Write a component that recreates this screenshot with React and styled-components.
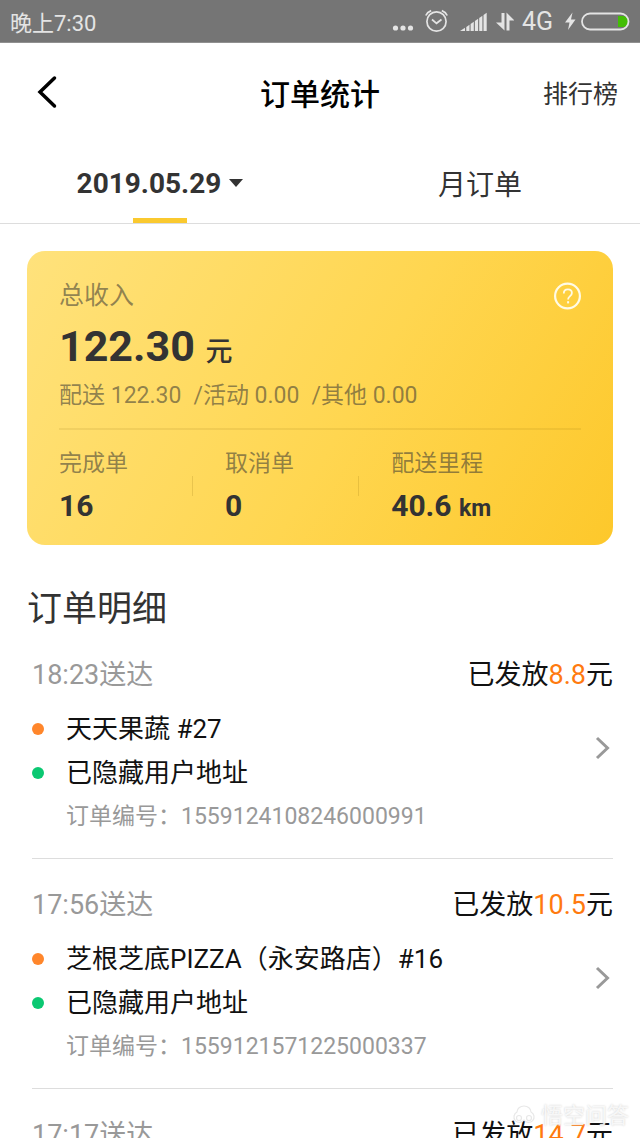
import React, { useState } from 'react'
import styled, { createGlobalStyle } from 'styled-components'

const stats = [
  { label: '完成单', value: '16' },
  { label: '取消单', value: '0' },
  { label: '配送里程', value: '40.6', unit: 'km' },
]

const orders = [
  { time: '18:23', pay: '8.8', shop: '天天果蔬 #27', address: '已隐藏用户地址', number: '1559124108246000991' },
  { time: '17:56', pay: '10.5', shop: '芝根芝底PIZZA（永安路店）#16', address: '已隐藏用户地址', number: '1559121571225000337' },
  { time: '17:17', pay: '14.7', shop: '天天果蔬 #21', address: '已隐藏用户地址', number: '1559119036117000254' },
]

const StatusIcons = () => (
  <StatusGroup>
    <svg width='23' height='42' fill='#e4e4e4'>
      <circle cx='4.5' cy='28' r='2.6' />
      <circle cx='12' cy='28' r='2.6' />
      <circle cx='19.5' cy='28' r='2.6' />
    </svg>
    <svg width='28' height='42' fill='none' stroke='#e4e4e4' strokeWidth='1.7'>
      <circle cx='14.5' cy='21.5' r='9.6' />
      <path d='M10 19.5l4.5 3.8 5-3.8' />
      <path d='M3.8 15.5c1-2.3 3-4 5.4-4.9M25.2 15.5c-1-2.3-3-4-5.4-4.9' />
    </svg>
    <svg width='30' height='42' fill='#e4e4e4'>
      <path d='M2 31l5-3.2V31z' />
      <path d='M8.3 27l3.2-2.2V31H8.3z' />
      <path d='M12.6 24l3.2-2.2V31h-3.2z' />
      <path d='M16.9 21l3.2-2.2V31h-3.2z' />
      <path d='M21.2 18l3.2-2.2V31h-3.2z' />
      <path d='M25.5 15l3.2-2.2V31h-3.2z' />
    </svg>
    <svg width='18' height='42' fill='#e4e4e4'>
      <path d='M5.5 13h3v17.5L0 22.5h5.5z' />
      <path d='M10.5 30.5h3V20.5H18.5L10.5 12.5z' />
    </svg>
    <span>4G</span>
    <svg width='69' height='42'>
      <path d='M11.5 12.5L4 22.5h4.5L7 30l7.5-10.5H10z' fill='#e4e4e4' />
      <path d='M57 16h5a5.5 5.5 0 0 1 0 11h-5z' fill='#43bd05' />
      <rect x='21' y='13.5' width='46.5' height='16' rx='8' fill='none' stroke='#e4e4e4' strokeWidth='1.8' />
    </svg>
  </StatusGroup>
)

const Order = ({ order }) => (
  <OrderItem>
    <OrderHead>
      <OrderTime>{order.time}送达</OrderTime>
      <span>
        已发放<Pay>{order.pay}</Pay>元
      </span>
    </OrderHead>
    <OrderLink href='#order'>
      <Route>
        <Stop $color='#ff862b'>{order.shop}</Stop>
        <Stop $color='#0bc872'>{order.address}</Stop>
        <OrderNumber>订单编号：{order.number}</OrderNumber>
      </Route>
      <svg width='22' height='74' fill='none' stroke='#999' strokeWidth='3' aria-hidden='true'>
        <path d='M6 27l10.5 10L6 47' />
      </svg>
    </OrderLink>
  </OrderItem>
)

const App = () => {
  const [tab, setTab] = useState('day')

  return (
    <Page>
      <GlobalStyle />
      <StatusBar>
        <span>晚上7:30</span>
        <StatusIcons />
      </StatusBar>

      <Header>
        <BackButton aria-label='返回'>
          <svg width='22' height='36' fill='none' stroke='#000' strokeWidth='3.5' strokeLinecap='round'>
            <path d='M18.5 4L4 18l14.5 14' />
          </svg>
        </BackButton>
        <Title>订单统计</Title>
        <RankLink href='#rank'>排行榜</RankLink>
      </Header>

      <Tabs>
        <Tab $active={tab === 'day'} onClick={() => setTab('day')}>
          2019.05.29
          <svg width='14' height='8' fill='#333' aria-hidden='true'>
            <path d='M0 0h14L7 8z' />
          </svg>
        </Tab>
        <Tab $active={tab === 'month'} onClick={() => setTab('month')}>
          月订单
        </Tab>
      </Tabs>

      <Card>
        <CardTop>
          <span>总收入</span>
          <HelpButton aria-label='收入说明'>
            <svg width='28' height='28' fill='none' stroke='#fffbe6' strokeWidth='2.2'>
              <circle cx='14.5' cy='14' r='12.4' />
              <path d='M10.8 11.4c0-2.6 1.6-4 4.1-4s4 1.4 4 3.6c0 3-3.8 3.2-3.8 6.4' strokeWidth='1.8' />
              <path d='M15.1 19.2v2.2' strokeWidth='2' />
            </svg>
          </HelpButton>
        </CardTop>
        <Amount>
          122.30 <AmountUnit>元</AmountUnit>
        </Amount>
        <Breakdown>
          <span>配送 122.30</span>
          <span>/活动 0.00</span>
          <span>/其他 0.00</span>
        </Breakdown>
        <Stats>
          {stats.map((stat) => (
            <Stat key={stat.label}>
              <div>
                <StatLabel>{stat.label}</StatLabel>
                <StatValue>
                  {stat.value} {stat.unit && <StatUnit>{stat.unit}</StatUnit>}
                </StatValue>
              </div>
            </Stat>
          ))}
        </Stats>
      </Card>

      <SectionTitle>订单明细</SectionTitle>
      <OrderList>
        {orders.map((order) => (
          <Order key={order.number} order={order} />
        ))}
      </OrderList>

      <Watermark>
        <svg width='28' height='24' fill='#fff' stroke='#e8e8e8' strokeWidth='1.2'>
          <path d='M7 8a7 6 0 0 1 14 0 5.5 5.5 0 1 1-7 8 5.5 5.5 0 1 1-7-8z' />
          <circle cx='9' cy='14' r='2.5' />
          <circle cx='19' cy='14' r='2.5' />
        </svg>
        悟空问答
      </Watermark>
    </Page>
  )
}

export default App

// Styled components
const GlobalStyle = createGlobalStyle`
  * {
    box-sizing: border-box;
  }

  body {
    margin: 0;
    background: #fff;
    font-family: Roboto, 'Noto Sans CJK SC', sans-serif;
  }

  button {
    padding: 0;
    border: none;
    background: none;
    font-family: inherit;
    cursor: pointer;
  }

  a {
    color: inherit;
    text-decoration: none;
  }

  svg {
    display: block;
    flex-shrink: 0;
  }
`

const Page = styled.div`
  position: relative;
  height: 100vh;
  overflow: hidden;
  color: #111;
`

const StatusBar = styled.div`
  display: flex;
  justify-content: space-between;
  align-items: center;
  height: 43px;
  padding: 0 10px;
  border-bottom: 1px solid #909090;
  background: #757575;
  color: #e4e4e4;
  font-size: 22px;
`

const StatusGroup = styled.div`
  display: flex;
  align-items: center;
  gap: 8px;
  font-size: 25px;
`

const Header = styled.header`
  display: grid;
  grid-template-columns: 1fr auto 1fr;
  align-items: center;
  height: 100px;
  padding: 0 22px 3px;
`

const BackButton = styled.button`
  justify-self: start;
  padding-left: 14px;
`

const Title = styled.h1`
  margin: 0;
  font-size: 30px;
  font-weight: 500;
  color: #000;
`

const RankLink = styled.a`
  justify-self: end;
  font-size: 25px;
  color: #333;
`

const Tabs = styled.nav`
  display: grid;
  grid-template-columns: 1fr 1fr;
  border-bottom: 1px solid #ddd;
`

const Tab = styled.button`
  display: flex;
  justify-content: center;
  align-items: center;
  gap: 8px;
  height: 80px;
  background: ${({ $active }) => ($active ? 'linear-gradient(#fac92f, #fac92f) center bottom / 54px 5px no-repeat' : 'none')};
  font-size: 28px;
  font-weight: ${({ $active }) => ($active ? 700 : 400)};
  color: #333;
`

const Card = styled.section`
  margin: 27px 27px 0;
  padding: 29px 32px 21px;
  border-radius: 18px;
  background: linear-gradient(120deg, #ffe27c 0%, #ffd650 55%, #fdc82b 100%);
  color: #333;
`

const CardTop = styled.div`
  display: flex;
  justify-content: space-between;
  align-items: center;
  font-size: 25px;
  line-height: 32px;
  color: rgba(51, 51, 51, 0.55);
`

const HelpButton = styled.button`
  display: flex;
`

const Amount = styled.div`
  margin: 8px 0;
  font-size: 43px;
  font-weight: 700;
  line-height: 52px;
`

const AmountUnit = styled.span`
  font-size: 27px;
  font-weight: 500;
  line-height: 1;
`

const Breakdown = styled.div`
  display: flex;
  gap: 12px;
  padding-bottom: 16px;
  border-bottom: 2px solid rgba(120, 90, 0, 0.1);
  font-size: 23px;
  line-height: 32px;
  color: rgba(51, 51, 51, 0.55);
`

const Stats = styled.div`
  display: grid;
  grid-template-columns: 7fr 7fr 8fr;
  margin-top: 18px;
`

const Stat = styled.div`
  display: flex;
  justify-content: space-between;
  align-items: center;
  padding-right: 32px;

  &:not(:last-child)::after {
    content: '';
    width: 1px;
    height: 20px;
    background: rgba(120, 90, 0, 0.16);
  }
`

const StatLabel = styled.div`
  font-size: 23px;
  line-height: 32px;
  color: rgba(51, 51, 51, 0.55);
`

const StatValue = styled.div`
  margin-top: 8px;
  font-size: 30px;
  font-weight: 700;
  line-height: 36px;
`

const StatUnit = styled.span`
  font-size: 23px;
  line-height: 1;
`

const SectionTitle = styled.h2`
  margin: 44px 27px 0;
  font-size: 35px;
  font-weight: 400;
  line-height: 42px;
  color: #333;
`

const OrderList = styled.ul`
  margin: 0;
  padding: 0 27px 0 32px;
  list-style: none;
`

const OrderItem = styled.li`
  padding: 28px 0 23px;
  border-bottom: 1px solid #ddd;

  &:first-child {
    padding-top: 26px;
  }
`

const OrderHead = styled.div`
  display: flex;
  justify-content: space-between;
  font-size: 27px;
  line-height: 36px;
`

const OrderTime = styled.span`
  color: #999;
`

const Pay = styled.span`
  color: #ff7a0f;
`

const OrderLink = styled.a`
  display: flex;
  justify-content: space-between;
  margin-top: 18px;
`

const Route = styled.div`
  display: flex;
  flex-direction: column;
  gap: 8px;
`

const Stop = styled.div`
  display: flex;
  align-items: center;
  gap: 22px;
  font-size: 26px;
  line-height: 36px;

  &::before {
    content: '';
    width: 12px;
    height: 12px;
    border-radius: 50%;
    background: ${({ $color }) => $color};
  }
`

const OrderNumber = styled.div`
  padding-left: 34px;
  font-size: 23px;
  line-height: 36px;
  color: #999;
`

const Watermark = styled.div`
  position: absolute;
  right: 11px;
  bottom: 10px;
  display: flex;
  align-items: center;
  gap: 3px;
  font-size: 22px;
  line-height: 24px;
  color: rgba(255, 255, 255, 0.8);
  text-shadow: 0 0 2px #ccc;
`
